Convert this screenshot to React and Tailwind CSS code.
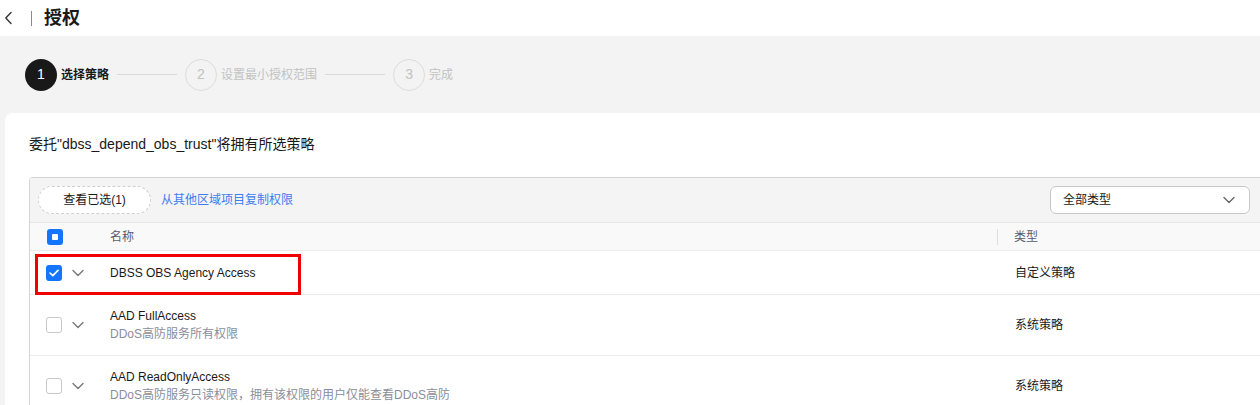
import React from 'react';

const font = { fontFamily: '"Liberation Sans", Arial, "Noto Sans CJK SC", sans-serif' };

const Chevron = ({ className = '' }) => (
  <svg className={className} width="12" height="8" viewBox="0 0 12 8" fill="none">
    <path d="M1 1.5 L6 6.5 L11 1.5" stroke="currentColor" strokeWidth="1.4" strokeLinecap="round" strokeLinejoin="round" />
  </svg>
);

const Checkbox = ({ state }) => {
  if (state === 'checked') {
    return (
      <div className="w-4 h-4 rounded-[3px] bg-[#1476ff] flex items-center justify-center">
        <svg width="10" height="8" viewBox="0 0 10 8" fill="none">
          <path d="M1 4 L3.8 6.6 L9 1.4" stroke="white" strokeWidth="1.6" strokeLinecap="round" strokeLinejoin="round" />
        </svg>
      </div>
    );
  }
  if (state === 'partial') {
    return (
      <div className="w-4 h-4 rounded-[3px] bg-[#1476ff] flex items-center justify-center">
        <div className="w-[6px] h-[6px] bg-white rounded-[1px]" />
      </div>
    );
  }
  return <div className="w-4 h-4 rounded-[3px] border border-[#c7c7c7] bg-white" />;
};

const Step = ({ n, label, active }) => (
  <div className="flex items-center">
    <div
      className={
        active
          ? 'w-8 h-8 rounded-full bg-[#191919] text-white flex items-center justify-center text-[14px]'
          : 'w-8 h-8 rounded-full border border-[#dcdcdc] text-[#c2c2c2] flex items-center justify-center text-[14px]'
      }
    >
      {n}
    </div>
    <span className={active ? 'ml-1 text-[12px] font-bold text-[#191919]' : 'ml-1 text-[12px] text-[#c2c2c2]'}>
      {label}
    </span>
  </div>
);

const rows = [
  { name: 'DBSS OBS Agency Access', desc: null, type: '自定义策略', checked: true },
  { name: 'AAD FullAccess', desc: 'DDoS高防服务所有权限', type: '系统策略' },
  { name: 'AAD ReadOnlyAccess', desc: 'DDoS高防服务只读权限，拥有该权限的用户仅能查看DDoS高防', type: '系统策略' },
];

export default function App() {
  return (
    <div className="w-[1260px] h-[405px] overflow-hidden bg-[#f3f3f3] flex flex-col" style={font}>
      {/* 顶部标题 */}
      <header className="h-[36px] bg-white flex items-center shrink-0">
        <svg className="ml-[4px] text-[#333]" width="9" height="14" viewBox="0 0 9 14" fill="none">
          <path d="M7 1.5 L1.8 7 L7 12.5" stroke="currentColor" strokeWidth="1.4" strokeLinecap="round" strokeLinejoin="round" />
        </svg>
        <div className="ml-[18px] w-px h-[15px] bg-[#8a8a8a]" />
        <h1 className="ml-[12px] text-[18px] font-bold text-[#191919] leading-none">授权</h1>
      </header>

      {/* 步骤条 */}
      <div className="h-[77px] flex items-center pl-[25px] shrink-0">
        <Step n="1" label="选择策略" active />
        <div className="mx-2 w-[60px] h-px bg-[#d9d9d9]" />
        <Step n="2" label="设置最小授权范围" />
        <div className="mx-2 w-[60px] h-px bg-[#d9d9d9]" />
        <Step n="3" label="完成" />
      </div>

      {/* 内容卡片 */}
      <main className="flex-1 ml-[5px] bg-white rounded-tl-[8px] pl-[24px] pt-[21px]">
        <p className="text-[14px] leading-[20px] text-[#191919]">委托"dbss_depend_obs_trust"将拥有所选策略</p>

        <div className="mt-[23px] border-l border-t border-[#d4d4d4] rounded-tl-[4px]">
          <div className="h-[44px] bg-[#f4f4f4] flex items-center pl-[8px] pr-[10px]">
            <button className="h-[28px] w-[113px] rounded-full border border-dashed border-[#cfcfcf] bg-white text-[12px] text-[#191919]">
              查看已选(1)
            </button>
            <a className="ml-[10px] text-[12px] text-[#3f7cf0]">从其他区域项目复制权限</a>
            <div className="ml-auto w-[200px] h-[28px] rounded-[6px] border border-[#c7c7c7] bg-white flex items-center pl-[12px] pr-[14px]">
              <span className="text-[12px] text-[#191919]">全部类型</span>
              <Chevron className="ml-auto text-[#666]" />
            </div>
          </div>

          <div className="h-[28px] bg-[#f9f9f9] border-t border-[#e6e6e6] flex items-center text-[12px] text-[#575d6c]">
            <div className="w-[80px] pl-[17px] flex items-center">
              <Checkbox state="partial" />
            </div>
            <div className="w-[888px] border-r border-[#dfdfdf] h-[16px] flex items-center">名称</div>
            <div className="pl-[16px]">类型</div>
          </div>

          {rows.map((r, i) => (
            <div
              key={i}
              className={
                (r.desc ? 'h-[61px]' : 'h-[44px]') +
                ' relative flex items-center border-t border-[#ebebeb] text-[12px]'
              }
            >
              {r.checked && (
                <div className="absolute z-10 left-[5px] top-[3px] w-[266px] h-[41px] border-[3px] border-[#f00000]" />
              )}
              <div className="w-[80px] pl-[16px] flex items-center">
                <Checkbox state={r.checked ? 'checked' : 'none'} />
                <Chevron className="ml-[10px] text-[#777]" />
              </div>
              <div className="w-[905px] flex flex-col leading-[18px]">
                <span className="text-[#191919]">{r.name}</span>
                {r.desc && <span className="text-[#8a8e99]">{r.desc}</span>}
              </div>
              <div className="text-[#191919]">{r.type}</div>
            </div>
          ))}
        </div>
      </main>
    </div>
  );
}
